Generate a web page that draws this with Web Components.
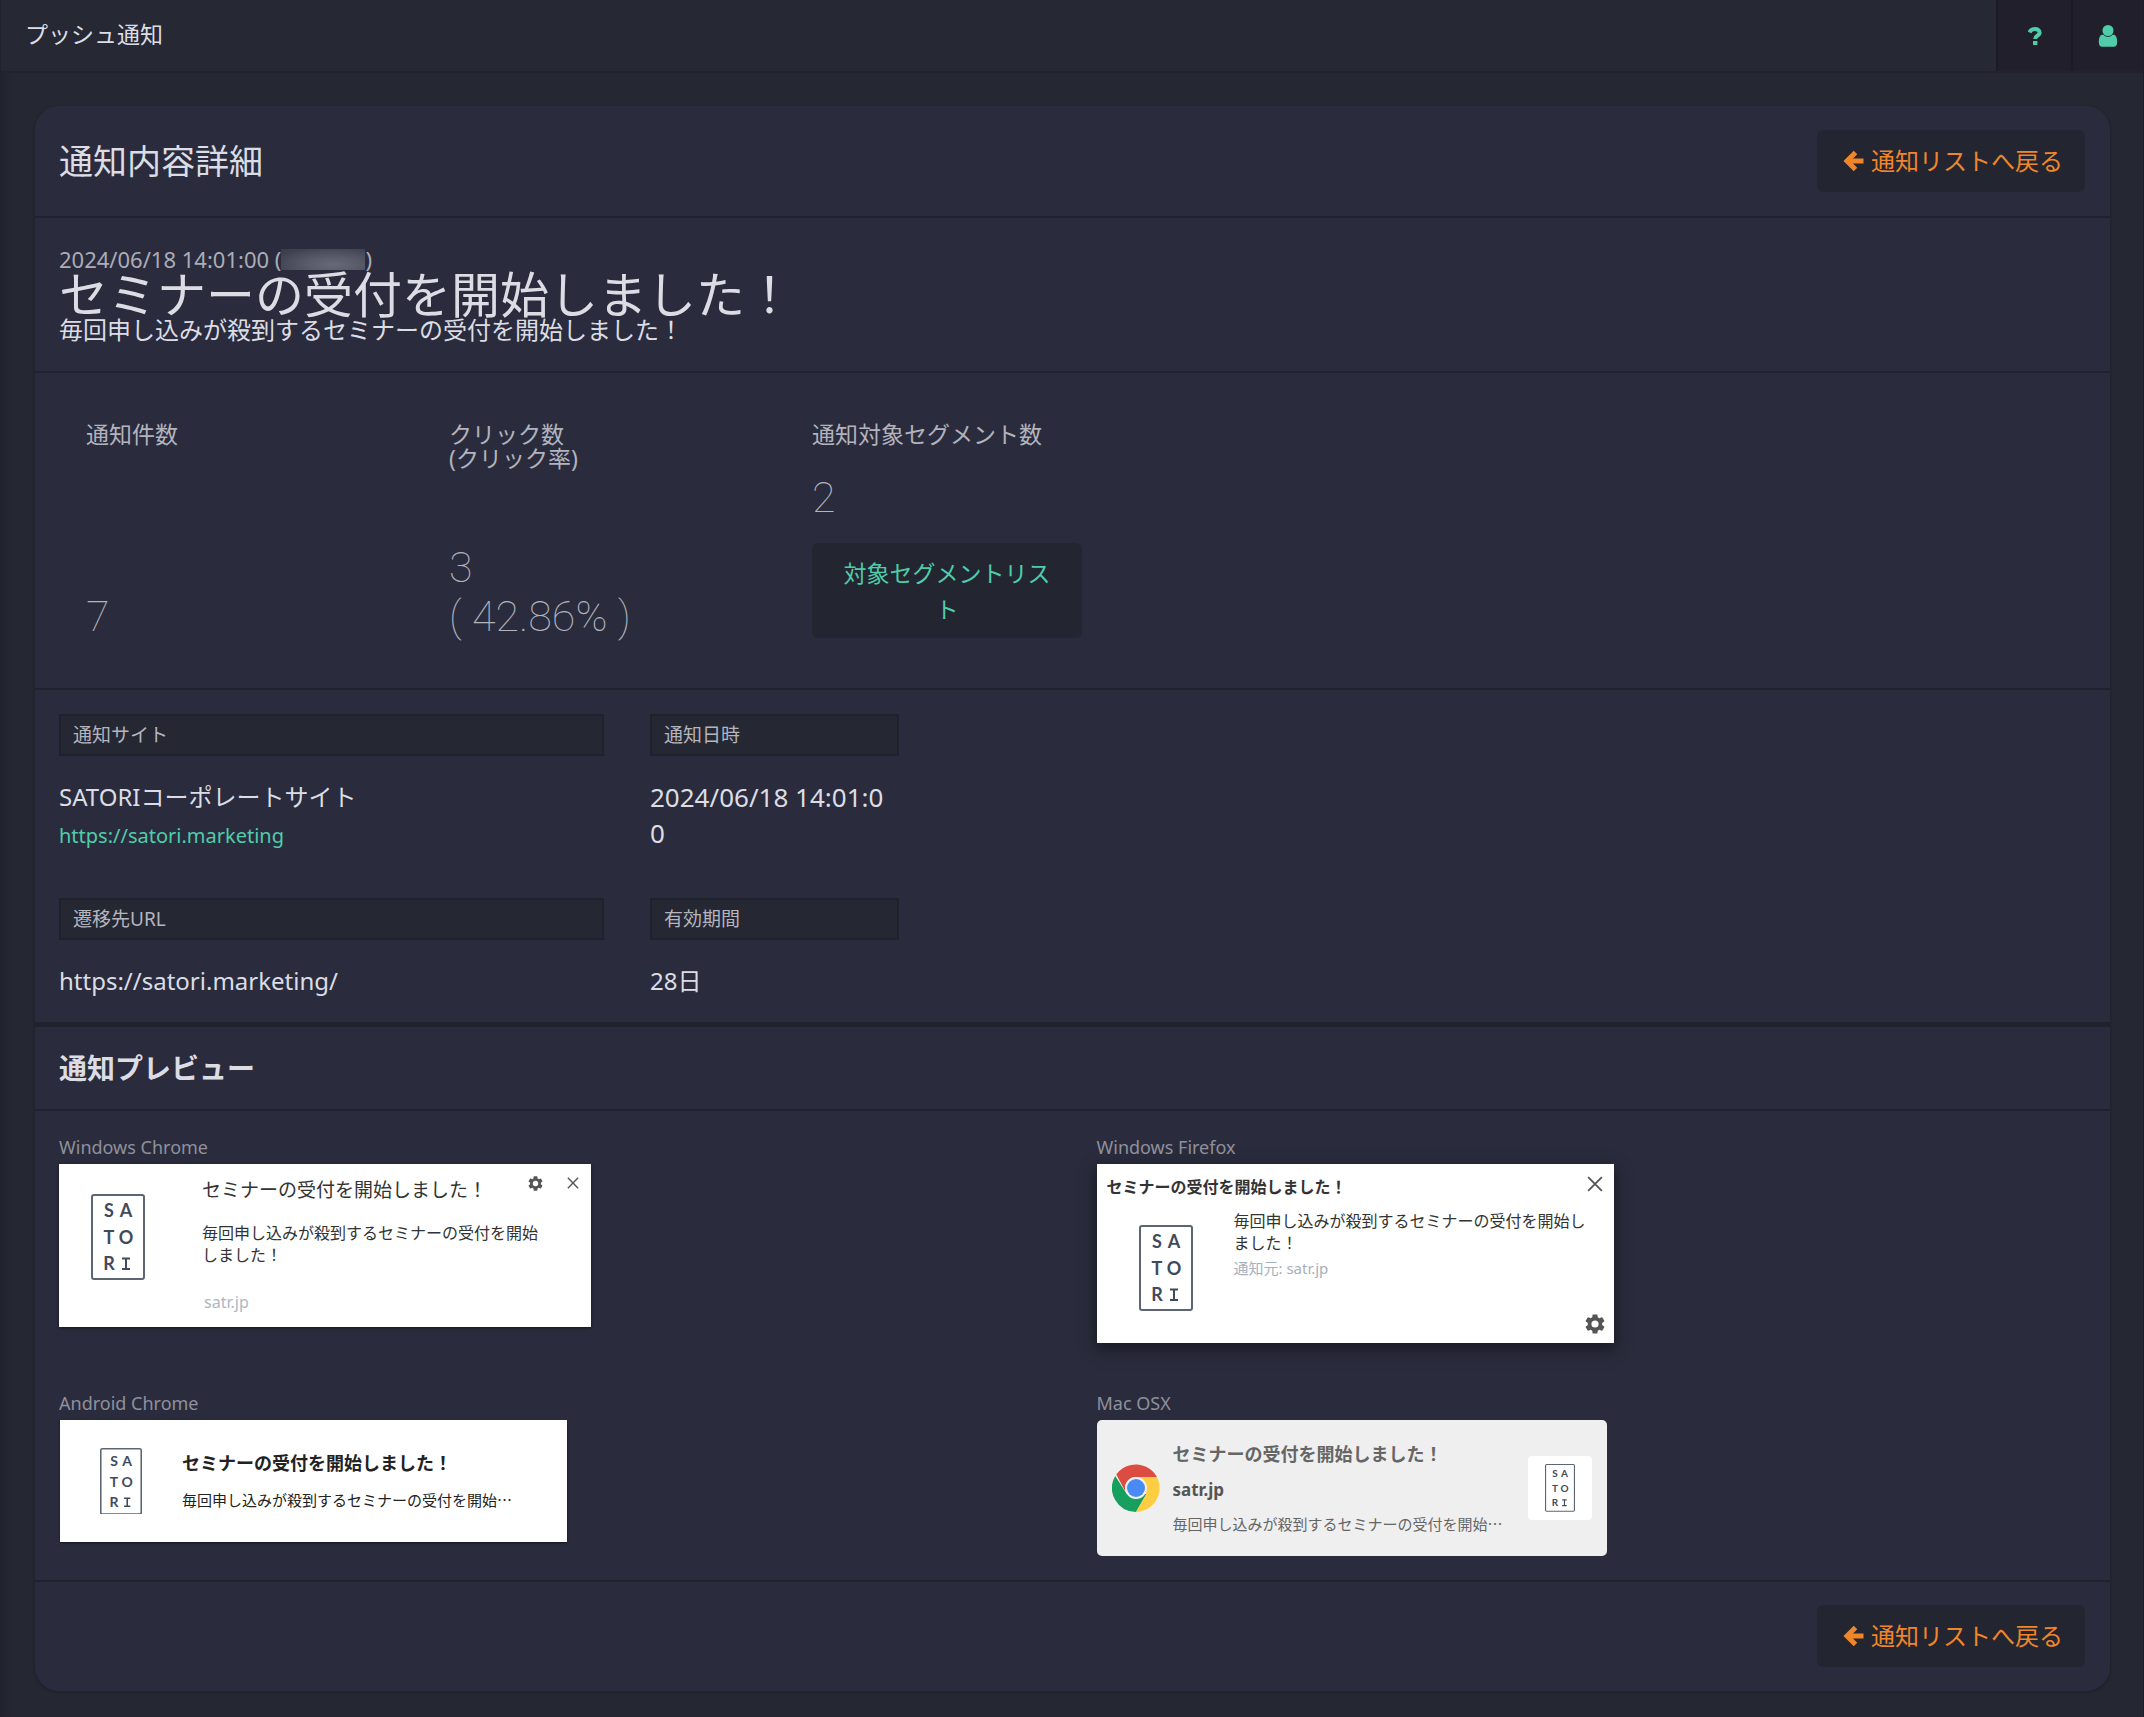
<!DOCTYPE html>
<html lang="ja">
<head>
<meta charset="utf-8">
<meta name="viewport" content="width=device-width, initial-scale=1">
<title>プッシュ通知</title>
<style>
html { background: #252732; }
body {
  margin: 0;
  font-family: "Noto Sans", "Noto Sans CJK JP", sans-serif;
  color: #dcdde4;
  --line: #20222e;
  --panel: #2a2c3d;
  --dark: #232631;
  --green: #4fcdaa;
  --orange: #f08529;
}
</style>
</head>
<body>
<push-page>
  <app-header slot="header">プッシュ通知</app-header>
  <detail-card>
    <card-head slot="head">
      通知内容詳細
      <back-button slot="action"></back-button>
    </card-head>
    <message-summary></message-summary>
    <stats-row>
      <stat-item label="通知件数"><span>7</span></stat-item>
      <stat-item label="クリック数" sub="(クリック率)"><span>3</span><span>( 42.86% )</span></stat-item>
      <stat-item label="通知対象セグメント数"><span>2</span><segment-button slot="action">対象セグメントリスト</segment-button></stat-item>
    </stats-row>
    <info-grid></info-grid>
    <preview-section></preview-section>
    <card-foot><back-button></back-button></card-foot>
  </detail-card>
</push-page>

<script>
function define(name, html, setup) {
  const tpl = document.createElement('template');
  tpl.innerHTML = '<style>*{box-sizing:border-box}:host{display:block}:host([hidden]){display:none}' +
    'button{font:inherit;border:0;margin:0;padding:0;background:none;cursor:pointer}p,h1,h2,h3,dl,dd{margin:0;font-weight:inherit}svg{display:block}</style>' + html;
  customElements.define(name, class extends HTMLElement {
    constructor() {
      super();
      this.attachShadow({ mode: 'open' }).append(tpl.content.cloneNode(true));
      if (setup) setup(this, this.shadowRoot);
    }
  });
}

const GEAR = '<svg viewBox="2 2 20 20" aria-hidden="true"><path fill="currentColor" d="M19.14 12.94c.04-.3.06-.61.06-.94 0-.32-.02-.64-.07-.94l2.03-1.58c.18-.14.23-.41.12-.61l-1.92-3.32c-.12-.22-.37-.29-.59-.22l-2.39.96c-.5-.38-1.03-.7-1.62-.94l-.36-2.54c-.04-.24-.24-.41-.48-.41h-3.84c-.24 0-.43.17-.47.41l-.36 2.54c-.59.24-1.13.57-1.62.94l-2.39-.96c-.22-.08-.47 0-.59.22L2.74 8.87c-.12.21-.08.47.12.61l2.03 1.58c-.05.3-.09.63-.09.94s.02.64.07.94l-2.03 1.58c-.18.14-.23.41-.12.61l1.92 3.32c.12.22.37.29.59.22l2.39-.96c.5.38 1.03.7 1.62.94l.36 2.54c.05.24.24.41.48.41h3.84c.24 0 .44-.17.47-.41l.36-2.54c.59-.24 1.13-.56 1.62-.94l2.39.96c.22.08.47 0 .59-.22l1.92-3.32c.12-.22.07-.47-.12-.61l-2.01-1.58zM12 15.6A3.6 3.6 0 1 1 12 8.4a3.6 3.6 0 0 1 0 7.2z"/></svg>';
const CROSS = '<svg viewBox="0 0 14 14" aria-hidden="true"><path d="M1 1l12 12M13 1L1 13" fill="none" stroke="currentColor" stroke-width="1.6"/></svg>';

define('push-page', `
<style>
:host { border-left: 1px solid var(--line); border-right: 1px solid #1c1d27; box-shadow: inset 8px 0 8px -6px #1f212b; }
main { padding: 33px 33px 27px 34px; }
</style>
<slot name="header"></slot>
<main><slot></slot></main>`);

define('app-header', `
<style>
header { display: flex; height: 73px; border-bottom: 2px solid var(--line); background: #262834; }
h1 { flex: 1; padding-left: 24px; font-size: 23px; line-height: 69px; }
button { width: 75px; display: grid; place-items: center; background: #211f2b; border-left: 2px solid #1b1b26; color: var(--green); }
.user { width: 72px; }
</style>
<header>
  <h1><slot></slot></h1>
  <button type="button" aria-label="ヘルプ"><svg width="14" height="18" viewBox="0 0 14 18"><path d="M1.5 5.5C2.5 3.2 4.4 2 7 2C9.800 2 11.600 3.500 11.600 5.500C11.600 7.500 10.300 8.200 9 9C7.700 9.800 7.200 10.300 7.200 12" fill="none" stroke="currentColor" stroke-width="4"/><path fill="currentColor" d="M5 14h4.400v4H5z"/></svg></button>
  <button type="button" class="user" aria-label="アカウント"><svg width="20" height="22" viewBox="0 0 20 22"><circle cx="10" cy="5.500" r="5.500" fill="currentColor"/><path fill="currentColor" d="M5.200 9.500C7.800 12.600 12.200 12.600 14.800 9.500 18 9.700 19.200 12.500 19.200 17c0 3-1.200 4.800-3.400 4.800H4.200C2 21.800.8 20 .8 17 .8 12.500 2 9.700 5.200 9.500z"/></svg></button>
</header>`);

define('detail-card', `
<style>
section { background: var(--panel); border-radius: 24px; box-shadow: 0 1px 2px 1px #20222c; }
</style>
<section><slot name="head"></slot><slot></slot></section>`);

define('card-head', `
<style>
:host { border-bottom: 2px solid var(--line); }
div { display: flex; align-items: center; justify-content: space-between; padding: 24px 25px 24px 24px; }
h2 { font-size: 34px; line-height: 48px; }
</style>
<div><h2><slot></slot></h2><slot name="action"></slot></div>`);

define('back-button', `
<style>
button { display: flex; align-items: center; gap: 7px; height: 62px; padding: 0 22px 0 26px; border-radius: 6px; background: var(--dark); color: var(--orange); font-size: 24px; line-height: 36px; }
</style>
<button type="button"><svg width="21" height="22" viewBox="0 0 21 22" aria-hidden="true"><path fill="none" stroke="currentColor" stroke-width="5" stroke-linejoin="miter" d="M12.500 2.500L4 11l8.500 8.500"/><path fill="none" stroke="currentColor" stroke-width="5" stroke-linecap="butt" d="M5 11h15.500"/></svg><span>通知リストへ戻る</span></button>`);

define('message-summary', `
<style>
:host { border-bottom: 2px solid var(--line); padding: 30px 24px 29px; }
.meta { display: flex; align-items: center; font-size: 22px; line-height: 22px; color: #acadb8; white-space: pre; }
.name { width: 84px; height: 21px; background: radial-gradient(ellipse at 62% 75%, #676878 0, #5a5b6a 35%, #404252 80%, #393b4b 100%); }
h2 { font-size: 49px; line-height: 48px; }
.body { font-size: 24px; line-height: 24px; }
</style>
<p class="meta">2024/06/18 14:01:00 (<span class="name"></span>)</p>
<h2>セミナーの受付を開始しました！</h2>
<p class="body">毎回申し込みが殺到するセミナーの受付を開始しました！</p>`);

define('stats-row', `
<style>
:host { border-bottom: 2px solid var(--line); }
div { display: grid; grid-template-columns: repeat(3, 270px); gap: 93px; padding: 49px 51px 47px; }
</style>
<div><slot></slot></div>`);

define('stat-item', `
<style>
:host { display: flex; flex-direction: column; color: #b2b3bc; }
h3 { font-size: 23px; line-height: 24px; }
h3 span { display: block; }
.num { margin-top: auto; padding-top: 27px; font: 100 43px/49px Roboto, "Noto Sans CJK JP", sans-serif; white-space: nowrap; }
::slotted(span) { display: block; }
</style>
<h3><span class="l"></span><span class="s"></span></h3>
<div class="num"><slot></slot></div>
<slot name="action"></slot>`, (el, root) => {
  root.querySelector('.l').textContent = el.getAttribute('label');
  root.querySelector('.s').textContent = el.getAttribute('sub') || '';
});

define('segment-button', `
<style>
:host { padding: 21px 0 3px; }
button { width: 100%; padding: 12px 28px 11px; border-radius: 6px; background: var(--dark); color: var(--green); font-size: 23px; line-height: 36px; line-break: anywhere; }
</style>
<button type="button"><slot></slot></button>`);

define('info-grid', `
<style>
:host { border-bottom: 5px solid var(--line); }
dl { display: grid; grid-template-columns: 545px 249px; gap: 41px 46px; padding: 24px 24px 23px; }
dt { padding: 0 12px; border: 2px solid #1f212c; background: #252733; color: #b4b5be; font-size: 19px; line-height: 38px; margin-bottom: 23px; }
dd { font-size: 24px; line-height: 36px; overflow-wrap: anywhere; }
.time { padding-right: 8px; font-size: 26px; }
a { display: block; color: var(--green); font-size: 20px; line-height: 42px; text-decoration: none; }
</style>
<dl>
  <div><dt>通知サイト</dt><dd>SATORIコーポレートサイト<a href="#">https://satori.marketing</a></dd></div>
  <div><dt>通知日時</dt><dd class="time">2024/06/18&nbsp;14:01:00</dd></div>
  <div><dt>遷移先URL</dt><dd>https://satori.marketing/</dd></div>
  <div><dt>有効期間</dt><dd>28日</dd></div>
</dl>`);

define('satori-logo', `
<style>
:host { display: block; width: 54px; flex: none; }
svg { width: 100%; }
text { font: 700 18px Lato, sans-serif; fill: #3f4b5b; }
</style>
<svg viewBox="0 0 54 86" role="img" aria-label="SATORI"><rect x="1" y="1" width="52" height="84" rx="2" fill="#fff" stroke="#5b6672" stroke-width="2"/>
<text text-anchor="middle" y="23"><tspan x="18">S</tspan><tspan x="35">A</tspan></text>
<text text-anchor="middle" y="50"><tspan x="18">T</tspan><tspan x="35">O</tspan></text>
<text text-anchor="middle" y="76"><tspan x="18">R</tspan></text><path d="M31 64.500h8M31 75h8M35 64.500V75" stroke="#3f4b5b" stroke-width="2"/></svg>`);

define('chrome-toast', `
<style>
article { display: flex; width: 532px; height: 163px; padding: 12px 12px 12px 32px; background: #fff; color: #333; box-shadow: 0 1px 3px #14151d; }
satori-logo { margin: 18px 57px 0 0; }
.text { flex: 1; }
h3 { font-size: 19px; line-height: 28px; }
.body { width: 345px; margin-top: 18px; font-size: 16px; line-height: 22px; }
.host { margin: 25px 0 0 2px; font-size: 16px; line-height: 22px; color: #adb7c2; }
.tools { display: flex; gap: 24px; align-items: flex-start; margin-left: -60px; color: #555; }
.tools button { color: inherit; }
.gear { width: 15px; } .close { width: 12px; padding-top: 1px; }
</style>
<article>
  <satori-logo></satori-logo>
  <div class="text"><h3>セミナーの受付を開始しました！</h3><p class="body">毎回申し込みが殺到するセミナーの受付を開始しました！</p><p class="host">satr.jp</p></div>
  <div class="tools"><button type="button" class="gear" aria-label="設定">${GEAR}</button><button type="button" class="close" aria-label="閉じる">${CROSS}</button></div>
</article>`);

define('firefox-toast', `
<style>
article { display: flex; flex-direction: column; width: 517px; height: 179px; padding: 10px 9px 9px 10px; background: #fff; color: #333; box-shadow: 0 5px 14px 1px #181922; }
header { display: flex; justify-content: space-between; }
h3 { font-size: 16px; line-height: 26px; font-weight: 700; }
button { color: #555; }
.close { width: 16px; height: 18px; padding-top: 2px; margin-right: 2px; }
.row { display: flex; flex: 1; }
satori-logo { margin: 25px 41px 0 32px; }
.text { flex: 1; margin-right: -20px; }
.body { width: 360px; font-size: 16px; line-height: 22px; margin-top: 10px; }
.host { margin-top: 3px; font-size: 15px; line-height: 22px; color: #a5b0c0; }
.gear { width: 20px; flex: none; align-self: flex-end; }
</style>
<article>
  <header><h3>セミナーの受付を開始しました！</h3><button type="button" class="close" aria-label="閉じる">${CROSS}</button></header>
  <div class="row"><satori-logo></satori-logo><div class="text"><p class="body">毎回申し込みが殺到するセミナーの受付を開始しました！</p><p class="host">通知元: satr.jp</p></div><button type="button" class="gear" aria-label="設定">${GEAR}</button></div>
</article>`);

define('android-toast', `
<style>
article { display: flex; align-items: center; gap: 40px; width: 507px; height: 122px; margin-left: 1px; padding: 0 40px; background: #fff; color: #222; box-shadow: 0 1px 2px #14151d; }
satori-logo { width: 42px; }
h3 { font-size: 18px; line-height: 28px; font-weight: 700; }
p { margin-top: 10px; font-size: 15px; line-height: 26px; white-space: nowrap; }
</style>
<article><satori-logo></satori-logo><div><h3>セミナーの受付を開始しました！</h3><p>毎回申し込みが殺到するセミナーの受付を開始⋯</p></div></article>`);

define('mac-toast', `
<style>
article { display: flex; align-items: center; width: 510px; height: 136px; padding: 0 15px; border-radius: 5px; background: #efefef; color: #666; }
.text { flex: 1; padding-left: 13px; white-space: nowrap; }
h3 { font-size: 18px; line-height: 36px; font-weight: 700; }
h3.host { font-size: 17px; color: #555; }
p { font-size: 15px; line-height: 32px; }
.thumb { width: 64px; height: 64px; display: grid; place-items: center; border-radius: 4px; background: #fff; }
satori-logo { width: 30px; }
</style>
<article>
  <svg width="48" height="48" viewBox="0 0 48 48" aria-hidden="true">
    <path fill="#17a05d" d="M3.200 12A24 24 0 0 0 24 48L34.400 30H24L14.500 29.500z"/>
    <path fill="#ffcd42" d="M24 48A24 24 0 0 0 44.900 13L24 13 34.400 30z"/>
    <path fill="#dc4c41" d="M4.300 10.500A24 24 0 0 1 44.900 13H24A11 11 0 0 0 14.500 29.500z"/>
    <circle cx="24" cy="24" r="11" fill="#f1f1f1"/><circle cx="24" cy="24" r="9" fill="#4a8af4"/>
  </svg>
  <div class="text"><h3>セミナーの受付を開始しました！</h3><h3 class="host">satr.jp</h3><p>毎回申し込みが殺到するセミナーの受付を開始⋯</p></div>
  <div class="thumb"><satori-logo></satori-logo></div>
</article>`);

define('preview-section', `
<style>
:host { border-bottom: 2px solid var(--line); }
h2 { padding: 0 24px; border-bottom: 2px solid var(--line); font-size: 28px; line-height: 82px; font-weight: 700; }
.grid { display: grid; grid-template-columns: 1fr 1fr; row-gap: 48px; padding: 24px 0; }
.grid > div { padding-left: 24px; }
h3 { margin-bottom: 5px; font-size: 18px; line-height: 24px; color: #8f909b; }
</style>
<h2>通知プレビュー</h2>
<div class="grid">
  <div><h3>Windows Chrome</h3><chrome-toast></chrome-toast></div>
  <div><h3>Windows Firefox</h3><firefox-toast></firefox-toast></div>
  <div><h3>Android Chrome</h3><android-toast></android-toast></div>
  <div><h3>Mac OSX</h3><mac-toast></mac-toast></div>
</div>`);

define('card-foot', `
<style>
div { display: flex; justify-content: flex-end; padding: 23px 25px 24px; }
</style>
<div><slot></slot></div>`);
</script>
</body>
</html>
